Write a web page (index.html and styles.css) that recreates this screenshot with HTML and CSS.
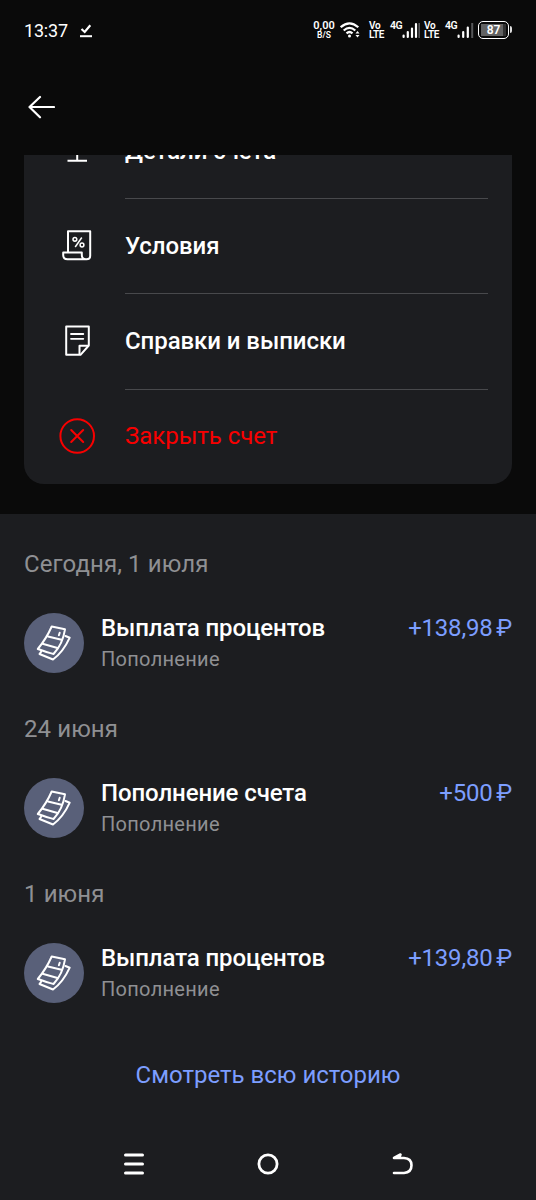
FILE: index.html
```html
<!DOCTYPE html>
<html lang="ru">
<head>
<meta charset="utf-8">
<title>Счет</title>
<link rel="stylesheet" href="styles.css">
</head>
<body>
<svg class="defs" width="0" height="0">
  <symbol id="signal" viewBox="0 0 18 18">
    <path d="M1.6 14.500v1.500M5.800 11v5M10 7.500v8.500M14 3v13" stroke="#fff" stroke-width="2.200" stroke-linecap="round"/>
    <path d="M17.200 2v15" stroke="#555658" stroke-width="1.600"/>
  </symbol>
  <symbol id="signal-low" viewBox="0 0 18 18">
    <path d="M1.600 14.500v1.500M6.200 11v5M10.800 6.500v9.500" stroke="#fff" stroke-width="2.200" stroke-linecap="round"/>
    <path d="M15.200 2v15" stroke="#555658" stroke-width="2"/>
  </symbol>
  <symbol id="bills" viewBox="0 0 60 60">
    <g fill="none" stroke="#fff" stroke-width="2" stroke-linejoin="round" stroke-linecap="round">
      <path d="M27.700 13.500L41 16.300C39.500 26 36 34 29.500 41C24.500 39.500 19 38 13.800 36C19.500 29 24 22 27.700 13.500Z"/>
      <path d="M24 23.500L37.500 26.800M18.500 30.700L33.500 35"/>
      <path d="M35.700 19.800L34.900 22.300"/>
      <path d="M41.500 23L45.700 24.700C41.500 34 36.500 41 29 46.500L15.500 41L17.300 38.500"/>
    </g>
  </symbol>
</svg>
<header class="status">
  <span class="clock">13:37</span>
  <svg class="check" width="14" height="16" viewBox="0 0 14 16"><path d="M1.500 6l3.200 3L10.300 2.200" fill="none" stroke="#fff" stroke-width="2.200"/><path d="M0 13.200h12" stroke="#fff" stroke-width="2"/></svg>
  <div class="indicators">
    <div class="stack speed"><span>0,00</span><small>B/S</small></div>
    <svg class="wifi" width="21" height="18" viewBox="0 0 21 18"><g fill="none" stroke="#fff" stroke-width="2.200"><path d="M.7 6.200Q9.500-1.600 18.300 6.200"/><path d="M3.700 9.500Q9.500 4.300 15.300 9.500"/><path d="M6.500 12.300Q9.500 9.700 12.500 12.300"/></g><circle cx="9.500" cy="15" r="1.500" fill="#fff"/><path d="M17.500 10l2 2.500h-4zM17.500 16.500l2-2.500h-4z" fill="#fff"/></svg>
    <div class="stack volte"><span>Vo</span><span>LTE</span></div>
    <div class="cell"><b>4G</b><svg width="18" height="18"><use href="#signal"/></svg></div>
    <div class="stack volte second"><span>Vo</span><span>LTE</span></div>
    <div class="cell next"><b>4G</b><svg width="18" height="18"><use href="#signal-low"/></svg></div>
    <div class="battery"><span>87</span></div>
  </div>
</header>
<div class="appbar">
  <svg width="28" height="24" viewBox="0 0 28 24"><path d="M13 2L2.500 12L13 22.300M2.500 12H27" fill="none" stroke="#fff" stroke-width="2.200" stroke-linecap="round" stroke-linejoin="round"/></svg>
</div>
<section class="menu">
  <a class="item">
    <svg width="36" height="36" viewBox="0 0 36 36"><path d="M8.500 28.700h19.500M18.200 28.500V10M11 15l7-6 7 6" fill="none" stroke="#fff" stroke-width="2"/></svg>
    <span>Детали счета</span>
  </a>
  <a class="item">
    <svg width="36" height="36" viewBox="0 0 36 36"><g fill="none" stroke="#fff" stroke-width="2" stroke-linejoin="round"><path d="M9 24V3.200H31.200V27.800Q31.200 31.300 27.500 31.300H8.500Q4.200 31.300 4.200 27V24.500H22.800V27Q22.800 31.300 27 31.300"/><circle cx="15.900" cy="11.300" r="1.900" stroke-width="1.500"/><circle cx="23" cy="17" r="1.900" stroke-width="1.500"/><path d="M22.800 9.500L16.200 19" stroke-width="1.500"/></g></svg>
    <span>Условия</span>
  </a>
  <a class="item">
    <svg width="36" height="36" viewBox="0 0 36 36"><g fill="none" stroke="#fff" stroke-width="2" stroke-linejoin="round"><path d="M7.200 3.500H29.800V22.500L21.500 31.800H7.200Z"/><path d="M29.500 22.800H20.500V31.500"/><path d="M12 11h12.300M12 15.800h12.300" stroke-linecap="round" stroke-width="1.800"/></g></svg>
    <span>Справки и выписки</span>
  </a>
  <a class="item danger">
    <svg width="36" height="36" viewBox="0 0 36 36"><circle cx="18.200" cy="18" r="16.800" fill="none" stroke="#f80000" stroke-width="2"/><path d="M12.200 12l12 12M24.200 12L12.200 24" stroke="#f80000" stroke-width="2" stroke-linecap="round"/></svg>
    <span>Закрыть счет</span>
  </a>
</section>
<main class="history">
  <section class="day">
    <h2>Сегодня, 1 июля</h2>
    <div class="entry"><svg class="avatar"><use href="#bills"/></svg><div class="info"><strong>Выплата процентов</strong><span>Пополнение</span></div><span class="sum">+138,98 ₽</span></div>
  </section>
  <section class="day">
    <h2>24 июня</h2>
    <div class="entry"><svg class="avatar"><use href="#bills"/></svg><div class="info"><strong>Пополнение счета</strong><span>Пополнение</span></div><span class="sum">+500 ₽</span></div>
  </section>
  <section class="day">
    <h2>1 июня</h2>
    <div class="entry"><svg class="avatar"><use href="#bills"/></svg><div class="info"><strong>Выплата процентов</strong><span>Пополнение</span></div><span class="sum">+139,80 ₽</span></div>
  </section>
  <a class="all">Смотреть всю историю</a>
</main>
<nav class="nav">
  <svg width="24" height="24" viewBox="0 0 24 24"><path d="M3.500 3h17M3.500 12h17M3.500 21h17" stroke="#fff" stroke-width="3" stroke-linecap="round"/></svg>
  <svg width="24" height="24" viewBox="0 0 24 24"><circle cx="12" cy="12" r="9.100" fill="none" stroke="#fff" stroke-width="2.800"/></svg>
  <svg width="24" height="24" viewBox="0 0 24 24"><path d="M3 21H13Q20.500 20.500 20.500 13.300Q20.500 6.300 13 6H3L9.500 2.500L8.500 5" fill="none" stroke="#fff" stroke-width="2.600" stroke-linecap="round" stroke-linejoin="round"/></svg>
</nav>
</body>
</html>
```
FILE: styles.css
```css
* { box-sizing: border-box; }
body {
  margin: 0;
  height: 1200px;
  display: flex;
  flex-direction: column;
  overflow: hidden;
  background: #0a0a0a;
  color: #fff;
  font-family: Roboto, sans-serif;
}
svg { display: block; flex: none; }
.defs { position: absolute; }
.status {
  height: 60px;
  flex: none;
  display: flex;
  align-items: center;
  padding: 0 24px;
}
.clock { font-size: 18px; width: 56px; letter-spacing: -.2px; }
.check { margin-top: 2px; }
.indicators { display: flex; align-items: center; margin-left: auto; height: 24px; }
.stack { display: flex; flex-direction: column; align-items: center; font-weight: 600; }
.speed { width: 22px; font-size: 11px; line-height: 10px; }
.speed small { font-size: 8.500px; line-height: 9px; }
.wifi { margin-left: 5px; }
.volte { width: 16px; margin-left: 8px; font-size: 10px; line-height: 9.500px; letter-spacing: -.3px; align-items: flex-start; }
.cell { display: flex; width: 30px; margin-left: 5px; align-items: center; }
.cell b { font-size: 10.500px; font-weight: 600; line-height: 10px; width: 12px; margin-bottom: 8px; letter-spacing: -.4px; white-space: nowrap; }
.second { margin-left: 4px; }
.next { margin-left: 5px; }
.battery {
  width: 31px;
  height: 18px;
  margin: 0 3px 0 3px;
  border: 1.500px solid #fff;
  border-radius: 5px;
  padding: 2px;
  position: relative;
}
.battery::after {
  content: "";
  position: absolute;
  right: -4px;
  top: 4px;
  width: 2px;
  height: 7px;
  background: #ddd;
  border-radius: 0 2px 2px 0;
}
.battery span {
  display: block;
  height: 12px;
  background: linear-gradient(90deg, #626262 87%, #303030 87%);
  font-size: 12px;
  font-weight: 600;
  line-height: 12px;
  text-align: center;
}
.appbar { height: 95px; flex: none; padding: 35px 27px 0; }
.menu {
  height: 329px;
  flex: none;
  margin: 0 24px 30px;
  background: #1c1d20;
  border-radius: 0 0 20px 20px;
  overflow: hidden;
  display: flex;
  flex-direction: column;
  justify-content: flex-end;
}
.item {
  height: 95.300px;
  flex: none;
  display: flex;
  align-items: center;
  padding: 0 24px 0 35px;
  gap: 30px;
  font-size: 24px;
  font-weight: 490;
  letter-spacing: -.07px;
}
.item span {
  flex: 1;
  height: 100%;
  line-height: 95px;
  position: relative;
  top: 1px;
  border-bottom: 1px solid #48494c;
}
.item:last-child span { border: 0; top: 0; font-weight: 450; letter-spacing: -.03px; }
.danger { color: #f80000; }
.history {
  flex: 1;
  background: #1c1d20;
  padding: 32px 24px 0;
}
.day { height: 165.200px; }
h2 {
  margin: 0;
  font-size: 24px;
  line-height: 36px;
  font-weight: 420;
  letter-spacing: .1px;
  color: #8f9093;
}
.entry { display: flex; margin-top: 31px; }
.avatar { width: 60px; height: 60px; border-radius: 50%; background: #596079; }
.info { flex: 1; display: flex; flex-direction: column; margin-left: 17px; }
.info strong { font-size: 24px; line-height: 30px; font-weight: 490; letter-spacing: -.1px; }
.info span { font-size: 20px; line-height: 32px; letter-spacing: .3px; color: #8f9093; }
.sum { color: #7c9eff; font-size: 24px; line-height: 30px; font-weight: 440; letter-spacing: -.2px; word-spacing: -2px; }
.all {
  display: block;
  margin-top: 16.500px;
  text-align: center;
  font-size: 24px;
  line-height: 34px;
  font-weight: 440;
  letter-spacing: 0;
  color: #7c9eff;
}
.nav {
  height: 72px;
  flex: none;
  display: flex;
  justify-content: center;
  align-items: center;
  gap: 110.500px;
  background: #1c1d20;
}
```
